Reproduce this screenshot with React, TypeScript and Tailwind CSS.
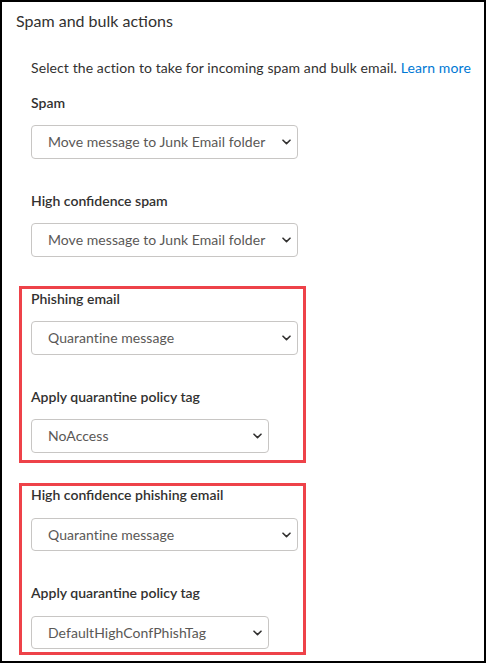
import React from "react";

const font = { fontFamily: 'Lato, "Noto Sans", sans-serif' };

function Chevron() {
  return (
    <svg width="9" height="6" viewBox="0 0 9 6" fill="none">
      <path d="M1 1.2L4.5 4.6L8 1.2" stroke="#323130" strokeWidth="1.6" strokeLinecap="round" strokeLinejoin="round" />
    </svg>
  );
}

function FakeSelect({ value, wide = true, h = 34 }: { value: string; wide?: boolean; h?: number }) {
  return (
    <div
      className={`flex items-center justify-between rounded-[4px] border border-[#c8c6c4] bg-white pl-[16px] ${wide ? "w-[267px] pr-[6px]" : "w-[238px] pr-[6px]"}`}
      style={{ height: h }}
    >
      <span className="whitespace-nowrap text-[14px] leading-[20px] tracking-[0.05px] text-[#5a5856]">{value}</span>
      <Chevron />
    </div>
  );
}

function Label({ children }: { children: React.ReactNode }) {
  return <div className="whitespace-nowrap text-[14px] leading-[20px] font-semibold text-[#323130]">{children}</div>;
}

export default function App() {
  return (
    <div style={font} className="w-[486px] h-[663px] border-2 border-black bg-white overflow-hidden">
      <div className="pl-[14px] pt-[8px] text-[16px] leading-[22px] text-[#323130]">Spam and bulk actions</div>
      <div className="pl-[29px] mt-[26px] whitespace-nowrap text-[14px] leading-[20px] tracking-[0.1px] text-[#323130]">
        Select the action to take for incoming spam and bulk email.{" "}
        <span className="text-[#0078d4]">Learn more</span>
      </div>
      <div className="pl-[29px] mt-[15px] flex flex-col">
        <Label>Spam</Label>
        <div className="mt-[12px]">
          <FakeSelect value="Move message to Junk Email folder" />
        </div>
        <div className="mt-[32px]">
          <Label>High confidence spam</Label>
        </div>
        <div className="mt-[12px]">
          <FakeSelect value="Move message to Junk Email folder" />
        </div>
      </div>
      <div className="ml-[17px] mt-[29px] w-[287px] border-[3px] border-[#ee4249] pl-[9px] pb-[7px] flex flex-col">
        <Label>Phishing email</Label>
        <div className="mt-[12px]">
          <FakeSelect value="Quarantine message" />
        </div>
        <div className="mt-[32px]">
          <Label>Apply quarantine policy tag</Label>
        </div>
        <div className="mt-[12px]">
          <FakeSelect value="NoAccess" wide={false} />
        </div>
      </div>
      <div className="ml-[17px] mt-[20px] w-[287px] border-[3px] border-[#ee4249] pl-[9px] pb-[3px] flex flex-col">
        <div className="-mt-[1px]">
          <Label>High confidence phishing email</Label>
        </div>
        <div className="mt-[13px]">
          <FakeSelect value="Quarantine message" h={33} />
        </div>
        <div className="mt-[32px]">
          <Label>Apply quarantine policy tag</Label>
        </div>
        <div className="mt-[13px]">
          <FakeSelect value="DefaultHighConfPhishTag" wide={false} h={33} />
        </div>
      </div>
    </div>
  );
}
